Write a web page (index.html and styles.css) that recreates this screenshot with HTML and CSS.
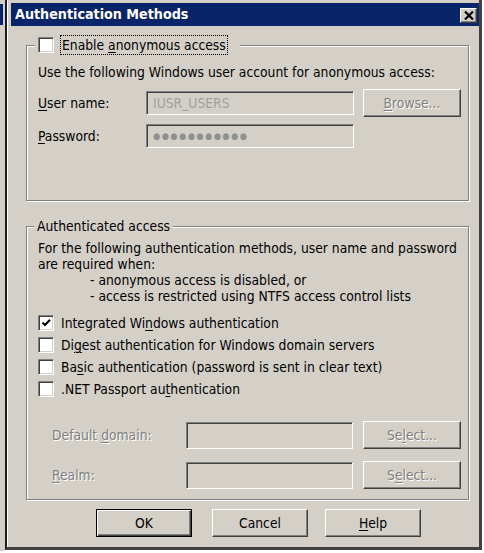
FILE: index.html
```html
<!DOCTYPE html>
<html>
<head>
<meta charset="utf-8">
<title>Authentication Methods</title>
<link rel="stylesheet" href="styles.css">
</head>
<body>
<div class="behind"><div class="behind-cap"></div></div>
<div class="window">
  <div class="titlebar">
    <span class="title">Authentication Methods</span>
    <span class="close"><svg width="10" height="9" viewBox="0 0 10 9"><path d="M1 0.5L9 8.5M9 0.5L1 8.5" stroke="#000" stroke-width="2.2" fill="none"/></svg></span>
  </div>
  <div class="content">
    <fieldset class="group group-anon">
      <legend class="legend-check"><span class="cb"></span><span class="focus">Enable <u>a</u>nonymous access</span></legend>
      <p class="desc">Use the following Windows user account for anonymous access:</p>
      <div class="field-row row-user">
        <span class="lbl"><u>U</u>ser name:</span>
        <span class="input">IUSR_USERS</span>
        <button class="btn btn-off" disabled><u>B</u>rowse...</button>
      </div>
      <div class="field-row row-pass">
        <span class="lbl"><u>P</u>assword:</span>
        <span class="input dots">●●●●●●●●●●●</span>
      </div>
    </fieldset>
    <fieldset class="group group-auth">
      <legend class="legend-text">Authenticated access</legend>
      <p class="desc desc-auth">For the following authentication methods, user name and password<br>are required when:</p>
      <p class="desc indent">- anonymous access is disabled, or<br>- access is restricted using NTFS access control lists</p>
      <ul class="checks">
        <li class="check-row"><span class="cb"><svg width="12" height="12" viewBox="0 0 12 12"><path d="M2.5 5.5L5 8L10 2.8" stroke="#000" stroke-width="2" fill="none"/></svg></span><span>Integrated Wi<u>n</u>dows authentication</span></li>
        <li class="check-row"><span class="cb"></span><span>Di<u>g</u>est authentication for Windows domain servers</span></li>
        <li class="check-row"><span class="cb"></span><span>Ba<u>s</u>ic authentication (password is sent in clear text)</span></li>
        <li class="check-row"><span class="cb"></span><span>.NET Passport au<u>t</u>hentication</span></li>
      </ul>
      <div class="field-row row-domain">
        <span class="lbl lbl-off">Default <u>d</u>omain:</span>
        <span class="input input-wide"></span>
        <button class="btn btn-off" disabled>Se<u>l</u>ect...</button>
      </div>
      <div class="field-row row-realm">
        <span class="lbl lbl-off"><u>R</u>ealm:</span>
        <span class="input input-wide"></span>
        <button class="btn btn-off" disabled>S<u>e</u>lect...</button>
      </div>
    </fieldset>
    <div class="actions">
      <button class="btn btn-action btn-default">OK</button>
      <button class="btn btn-action btn-cancel">Cancel</button>
      <button class="btn btn-action btn-help"><u>H</u>elp</button>
    </div>
  </div>
</div>
</body>
</html>
```
FILE: styles.css
```css
html, body {
  margin: 0;
  padding: 0;
}
body {
  width: 484px;
  height: 553px;
  overflow: hidden;
  background: #ffffff;
  display: flex;
  align-items: flex-start;
  font-family: "DejaVu Sans Condensed", "DejaVu Sans", sans-serif;
  font-stretch: condensed;
  font-size: 13.75px;
  color: #000;
}
.behind {
  width: 5px;
  height: 551px;
  box-sizing: border-box;
  padding-top: 4px;
  background: #d4d0c8;
}
.behind-cap {
  width: 3px;
  height: 21px;
  background: #0a246a;
}
.window {
  width: 477px;
  height: 550px;
  box-sizing: border-box;
  background: #d4d0c8;
  border-left: 2px solid #1c1c1c;
  border-right: 3px solid #404040;
  border-bottom: 3px solid #404040;
  box-shadow: inset 1px 0 0 #ffffff;
  padding: 3px 0 0 4px;
  display: flex;
  flex-direction: column;
}
.titlebar {
  height: 23px;
  background: #0a246a;
  display: flex;
  justify-content: space-between;
  align-items: flex-start;
  padding-left: 4px;
}
.title {
  color: #fff;
  font-weight: bold;
  line-height: 23px;
  font-size: 14.2px;
}
.close {
  width: 17px;
  height: 15px;
  margin: 5px 2px 0 0;
  box-sizing: border-box;
  background: #d4d0c8;
  border: 1px solid;
  border-color: #ffffff #404040 #404040 #ffffff;
  box-shadow: inset -1px -1px 0 #808080;
  display: flex;
  align-items: center;
  justify-content: center;
}
.close svg { display: block; }
.content {
  padding: 0 10px 0 15px;
}
.group {
  margin: 0;
  padding: 0 2px 0 11px;
  border: 1px solid #808080;
  box-shadow: inset 1px 1px 0 #ffffff, 1px 1px 0 #ffffff;
  min-width: 0;
}
.group-anon {
  margin-top: 9px;
  padding-bottom: 50px;
}
.group-auth {
  margin-top: 17px;
  padding-bottom: 10px;
}
legend {
  background: #d4d0c8;
}
.legend-check {
  display: flex;
  align-items: center;
  gap: 6px;
  height: 20px;
  margin-left: -3px;
  padding: 0 12px 0 3px;
}
.focus {
  height: 20px;
  box-sizing: border-box;
  border: 1px dotted #000;
  padding: 0 1px;
  line-height: 18px;
}
.legend-text {
  line-height: 16px;
  margin-left: -4px;
  padding: 0 3px;
}
.cb {
  width: 16px;
  height: 16px;
  flex: none;
  box-sizing: border-box;
  background: #fff;
  border: 1px solid;
  border-color: #808080 #ffffff #ffffff #808080;
  box-shadow: inset 1px 1px 0 #404040, inset -1px -1px 0 #d4d0c8;
  display: flex;
  align-items: center;
  justify-content: center;
}
.cb svg { display: block; }
.desc {
  margin: 9px 0 0;
  line-height: 16px;
  white-space: nowrap;
}
.desc-auth {
  margin-top: 6px;
}
.indent {
  margin: 0 0 0 52px;
}
.field-row {
  display: flex;
  align-items: center;
  height: 28px;
}
.row-user { margin-top: 9px; }
.row-pass { margin-top: 5px; }
.row-domain { margin-top: 21px; padding-left: 14px; }
.row-realm { margin-top: 12px; padding-left: 14px; }
.lbl {
  width: 108px;
  flex: none;
}
.row-domain .lbl, .row-realm .lbl {
  width: 134px;
}
.lbl-off {
  color: #808080;
  text-shadow: 1px 1px 0 #ffffff;
}
.input {
  width: 208px;
  height: 24px;
  flex: none;
  box-sizing: border-box;
  border: 1px solid;
  border-color: #808080 #ffffff #ffffff #808080;
  box-shadow: inset 1px 1px 0 #404040, inset -1px -1px 0 #d4d0c8;
  padding-left: 6px;
  line-height: 22px;
  color: #a0a0a0;
}
.input-wide {
  width: 167px;
  height: 27px;
}
.dots {
  font-size: 9px;
  letter-spacing: 1.6px;
  color: #909090;
}
.btn {
  width: 98px;
  height: 28px;
  flex: none;
  margin: 0 0 0 9px;
  padding: 0;
  box-sizing: border-box;
  font: inherit;
  color: #000;
  background: #d4d0c8;
  border: 1px solid;
  border-color: #ffffff #404040 #404040 #ffffff;
  box-shadow: inset -1px -1px 0 #808080;
  border-radius: 0;
}
.row-domain .btn, .row-realm .btn {
  margin-left: 10px;
}
.btn-off {
  color: #808080;
  text-shadow: 1px 1px 0 #ffffff;
}
.actions {
  display: flex;
  margin-top: 9px;
  padding-left: 70px;
}
.btn-action {
  width: 96px;
  margin: 0;
}
.btn-cancel { margin-left: 20px; }
.btn-help { margin-left: 17px; }
.btn-default {
  border: 1px solid #000;
  box-shadow: inset 1px 1px 0 #ffffff, inset -1px -1px 0 #404040, inset -2px -2px 0 #808080;
}
.checks {
  list-style: none;
  margin: 8px 0 0;
  padding: 0;
}
.check-row {
  display: flex;
  align-items: center;
  gap: 7px;
  height: 22px;
}
u {
  text-decoration-thickness: 1px;
  text-underline-offset: 2px;
}
```
